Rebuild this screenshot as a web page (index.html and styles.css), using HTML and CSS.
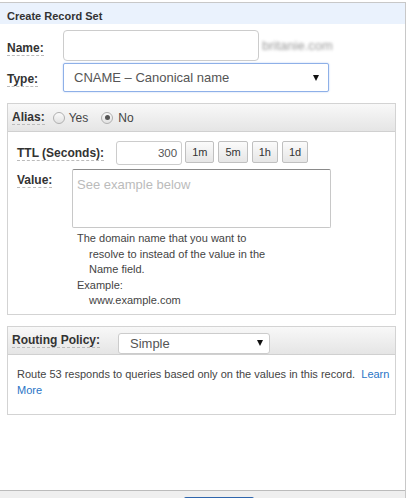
FILE: index.html
```html
<!DOCTYPE html>
<html>
<head>
<meta charset="utf-8">
<link rel="stylesheet" href="styles.css">
</head>
<body>
<div class="panel">
  <div class="hd">Create Record Set</div>
  <div class="bd">
    <div class="row name-row">
      <div class="lcol"><span class="lbl">Name:</span></div>
      <div class="inp name-inp"></div>
      <span class="blur">britanie.com</span>
    </div>
    <div class="row type-row">
      <div class="lcol"><span class="lbl">Type:</span></div>
      <div class="sel type-sel"><span>CNAME – Canonical name</span><i class="arr"></i></div>
    </div>

    <div class="box alias-box">
      <div class="box-hd">
        <span class="lbl">Alias:</span>
        <span class="radio"></span><span class="rtext">Yes</span>
        <span class="radio on"></span><span class="rtext">No</span>
      </div>
      <div class="box-bd alias-bd">
        <div class="ttl-row">
          <span class="lbl ttl-lbl">TTL (Seconds):</span>
          <div class="inp ttl-inp">300</div>
          <span class="btn">1m</span>
          <span class="btn">5m</span>
          <span class="btn">1h</span>
          <span class="btn">1d</span>
        </div>
        <div class="val-row">
          <div class="vcol"><span class="lbl">Value:</span></div>
          <div class="ta">See example below</div>
        </div>
        <div class="help">
          <div class="hang">The domain name that you want to<br>resolve to instead of the value in the<br>Name field.</div>
          <div class="hang">Example:<br>www.example.com</div>
        </div>
      </div>
    </div>

    <div class="box route-box">
      <div class="box-hd">
        <span class="lbl">Routing Policy:</span>
        <div class="sel route-sel"><span>Simple</span><i class="arr"></i></div>
      </div>
      <div class="box-bd route-bd">
        Route 53 responds to queries based only on the values in this record.&nbsp; <a class="link">Learn<br>More</a>
      </div>
    </div>
  </div>
  <div class="ft"><span class="primary"></span></div>
</div>
</body>
</html>
```

FILE: styles.css
```css
html, body {
  margin: 0;
  padding: 0;
  background: #fff;
  overflow: hidden;
}
body {
  width: 411px;
  height: 498px;
  font-family: "Liberation Sans", Arial, sans-serif;
  color: #444;
}
.panel {
  margin: 2px 0 0 -1px;
  width: 407px;
  box-sizing: border-box;
  border: 1px solid #c8c8c8;
  border-bottom: none;
  background: #fff;
}
.hd {
  height: 21px;
  box-sizing: border-box;
  padding: 5px 0 0 7px;
  line-height: 16px;
  font-size: 11px;
  font-weight: bold;
  color: #333;
  background: #eaf2fd;
}
.bd {
  height: 466px;
  box-sizing: border-box;
  padding: 6px 0 0 7px;
}
.row {
  display: flex;
  align-items: center;
}
.lbl {
  font-size: 12px;
  font-weight: bold;
  color: #333;
  line-height: 14px;
  border-bottom: 1px dashed #bbb;
}
.lcol {
  width: 56px;
  flex: none;
}
.name-row .lcol { padding-top: 2px; }
.inp {
  box-sizing: border-box;
  border: 1px solid #ccc;
  border-radius: 4px;
  background: #fff;
}
.name-inp {
  width: 196px;
  height: 31px;
}
.blur {
  margin-left: 3px;
  font-size: 13px;
  color: #9a9a9a;
  filter: blur(1.4px);
}
.type-row {
  margin-top: 2px;
}
.sel {
  position: relative;
  box-sizing: border-box;
  display: flex;
  align-items: center;
  background: #fff;
  font-size: 13px;
  color: #555;
}
.type-sel {
  width: 266px;
  height: 29px;
  padding-left: 10px;
  border: 1px solid #8eb0e8;
  border-radius: 2px;
  box-shadow: 0 0 2px #b8cff2;
}
.arr {
  position: absolute;
  top: 50%;
  right: 9px;
  margin-top: -3px;
  width: 0;
  height: 0;
  border-left: 3.5px solid transparent;
  border-right: 3.5px solid transparent;
  border-top: 6px solid #111;
}
.box {
  margin-top: 11px;
  width: 389px;
  box-sizing: border-box;
  border: 1px solid #d3d3d3;
}
.box-hd {
  height: 28px;
  box-sizing: border-box;
  display: flex;
  align-items: center;
  padding-left: 4px;
  background: linear-gradient(#f8f8f8, #e5e5e5);
  border-bottom: 1px solid #d0d0d0;
}
.radio {
  width: 12px;
  height: 12px;
  box-sizing: border-box;
  border: 1px solid #b0b0b0;
  border-radius: 50%;
  background: linear-gradient(#fafafa, #e2e2e2);
  position: relative;
  margin-left: 8px;
}
.radio.on { margin-left: 13px; }
.radio.on::after {
  content: "";
  position: absolute;
  left: 2.5px;
  top: 2.5px;
  width: 5px;
  height: 5px;
  border-radius: 50%;
  background: #555;
}
.rtext {
  font-size: 12px;
  color: #444;
  margin-left: 4px;
}
.rtext:last-child { margin-left: 5px; }
.box-bd {
  padding-left: 9px;
}
.alias-bd {
  padding-top: 9px;
  padding-bottom: 5px;
}
.ttl-row {
  display: flex;
  align-items: flex-start;
}
.ttl-lbl {
  margin-top: 5px;
  margin-right: 12px;
}
.ttl-inp {
  width: 66px;
  height: 24px;
  border-radius: 3px;
  text-align: right;
  padding-right: 4px;
  font-size: 11.5px;
  line-height: 22px;
  color: #555;
  margin-right: 3px;
}
.btn {
  box-sizing: border-box;
  height: 22px;
  padding: 0 6px;
  margin-right: 4px;
  font-size: 11px;
  line-height: 20px;
  color: #333;
  border: 1px solid #c0c0c0;
  border-radius: 2px;
  background: linear-gradient(#fbfbfb, #e6e6e6);
}
.val-row {
  display: flex;
  align-items: flex-start;
  margin-top: 4px;
}
.vcol {
  width: 55px;
  flex: none;
  padding-top: 1px;
}
.ta {
  width: 259px;
  height: 59px;
  box-sizing: border-box;
  border: 1px solid #c8c8c8;
  border-top-color: #8a8a8a;
  border-radius: 2px;
  padding: 7px 0 0 4px;
  font-size: 13px;
  line-height: 15px;
  color: #bbb;
}
.help {
  margin: 3px 0 0 60px;
  font-size: 11px;
  line-height: 15.5px;
  color: #444;
}
.hang {
  padding-left: 12px;
  text-indent: -12px;
}
.route-sel {
  width: 152px;
  height: 21px;
  margin-left: 18px;
  margin-top: 6px;
  padding-left: 11px;
  border: 1px solid #ccc;
  border-radius: 3px;
}
.route-sel .arr { right: 6px; }
.route-bd {
  padding-top: 11px;
  padding-bottom: 15px;
  padding-left: 9px;
  font-size: 11px;
  line-height: 16.5px;
  color: #444;
}
.link {
  color: #2a75c6;
}
.ft {
  height: 20px;
  border-top: 1px solid #bbb;
  background: #efefef;
  padding-left: 184px;
  padding-top: 6px;
  box-sizing: border-box;
}
.primary {
  display: block;
  width: 70px;
  height: 20px;
  background: #2f66ad;
  border-radius: 2px;
}
```
